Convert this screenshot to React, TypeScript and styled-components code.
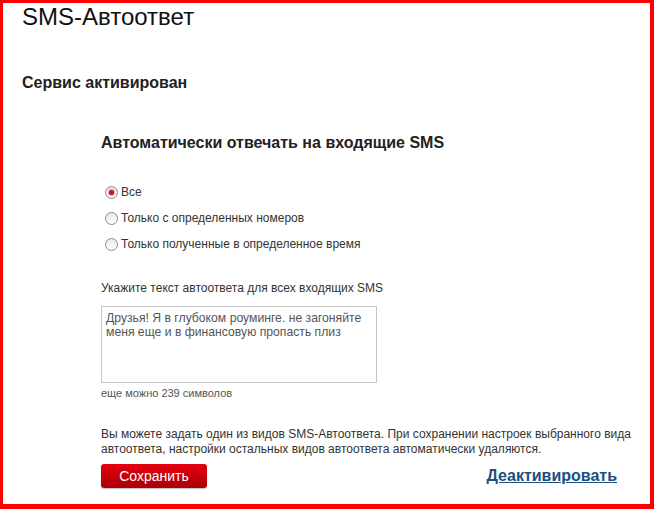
import React, { useState } from "react";
import styled, { createGlobalStyle } from "styled-components";

const Global = createGlobalStyle`
  html, body { margin: 0; padding: 0; background: #fff; }
  body { font-family: "Liberation Sans", Arial, sans-serif; color: #222; }
  * { box-sizing: border-box; }
`;

const Frame = styled.div`
  width: 654px;
  height: 509px;
  border-style: solid;
  border-color: #ff0000;
  border-width: 3px 4px 5px 3px;
  background: #fff;
  overflow: hidden;
`;

const Title = styled.h1`
  margin: 0 0 0 19px;
  font-size: 24px;
  line-height: 28px;
  font-weight: normal;
  color: #111;
`;

const Status = styled.h2`
  margin: 42px 0 0 19px;
  font-size: 16px;
  line-height: 20px;
  font-weight: bold;
  color: #222;
`;

const Content = styled.div`
  margin-left: 98px;
  width: 545px;
  display: flex;
  flex-direction: column;
`;

const Heading = styled.h3`
  margin: 40px 0 0 0;
  font-size: 16px;
  line-height: 19px;
  font-weight: bold;
  color: #222;
`;

const RadioGroup = styled.div`
  margin-top: 27px;
  display: flex;
  flex-direction: column;
`;

const RadioRow = styled.label`
  display: flex;
  align-items: center;
  height: 26px;
  font-size: 12px;
  color: #333;
  cursor: pointer;
`;

const RadioCircle = styled.span<{ $checked: boolean }>`
  width: 13px;
  height: 13px;
  margin: 0 3px 0 4px;
  border-radius: 50%;
  border: 1px solid #8a8a8a;
  background: linear-gradient(#e8e8e8, #ffffff);
  display: inline-flex;
  align-items: center;
  justify-content: center;
  flex-shrink: 0;
  &::after {
    content: "";
    width: 5px;
    height: 5px;
    border-radius: 50%;
    background: ${(p) => (p.$checked ? "#c8102e" : "transparent")};
    box-shadow: ${(p) => (p.$checked ? "0 0 1px 1px rgba(200,16,46,0.35)" : "none")};
  }
`;

const FieldLabel = styled.div`
  margin-top: 24px;
  font-size: 12px;
  line-height: 14px;
  color: #333;
`;

const TextArea = styled.textarea`
  margin-top: 11px;
  width: 276px;
  height: 77px;
  border: 1px solid #c6c6c6;
  padding: 4px 4px;
  font-family: "Liberation Sans", Arial, sans-serif;
  font-size: 12.2px;
  line-height: 14px;
  color: #555;
  resize: none;
  outline: none;
`;

const Counter = styled.div`
  margin-top: 4px;
  font-size: 11px;
  line-height: 13px;
  color: #555;
`;

const Note = styled.p`
  margin: 27px 0 0 0;
  font-size: 12px;
  line-height: 15px;
  color: #333;
`;

const Actions = styled.div`
  margin-top: 7px;
  width: 516px;
  display: flex;
  align-items: center;
  justify-content: space-between;
`;

const SaveButton = styled.button`
  width: 106px;
  height: 24px;
  border: none;
  border-radius: 3px;
  background: linear-gradient(#e5000f, #c4000a 60%, #a80008);
  box-shadow: 0 1px 1px rgba(0, 0, 0, 0.25);
  color: #fff;
  font-family: "Liberation Sans", Arial, sans-serif;
  font-size: 14px;
  padding: 0;
  cursor: pointer;
`;

const DeactivateLink = styled.a`
  font-size: 16px;
  font-weight: bold;
  color: #1b4f7e;
  text-decoration: underline;
  cursor: pointer;
`;

const options = [
  "Все",
  "Только с определенных номеров",
  "Только полученные в определенное время",
];

export default function App() {
  const [selected, setSelected] = useState(0);
  const [text, setText] = useState(
    "Друзья! Я в глубоком роуминге. не загоняйте меня еще и в финансовую пропасть плиз"
  );
  return (
    <>
      <Global />
      <Frame>
        <Title>SMS-Автоответ</Title>
        <Status>Сервис активирован</Status>
        <Content>
          <Heading>Автоматически отвечать на входящие SMS</Heading>
          <RadioGroup>
            {options.map((o, i) => (
              <RadioRow key={o} onClick={() => setSelected(i)}>
                <RadioCircle $checked={selected === i} />
                {o}
              </RadioRow>
            ))}
          </RadioGroup>
          <FieldLabel>Укажите текст автоответа для всех входящих SMS</FieldLabel>
          <TextArea value={text} onChange={(e) => setText(e.target.value)} />
          <Counter>еще можно 239 символов</Counter>
          <Note>
            Вы можете задать один из видов SMS-Автоответа. При сохранении настроек выбранного
            вида автоответа, настройки остальных видов автоответа автоматически удаляются.
          </Note>
          <Actions>
            <SaveButton>Сохранить</SaveButton>
            <DeactivateLink>Деактивировать</DeactivateLink>
          </Actions>
        </Content>
      </Frame>
    </>
  );
}
